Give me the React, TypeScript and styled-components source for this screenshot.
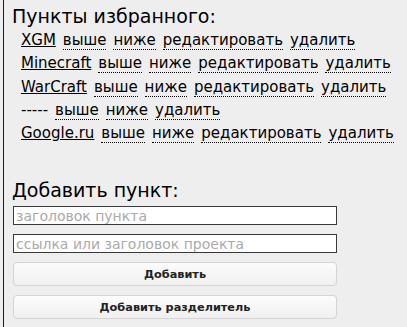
import React from "react";
import styled, { createGlobalStyle } from "styled-components";

const GlobalStyle = createGlobalStyle`
  html, body {
    margin: 0;
    padding: 0;
    background: #eeeeee;
  }
  body {
    padding-left: 3px;
    font-family: "DejaVu Sans", Verdana, sans-serif;
    color: #000;
  }
`;

type Item = { title: string; separator?: boolean };

const items: Item[] = [
  { title: "XGM" },
  { title: "Minecraft" },
  { title: "WarCraft" },
  { title: "-----", separator: true },
  { title: "Google.ru" },
];

const App: React.FC = () => {
  return (
    <>
      <GlobalStyle />
      <Panel>
        <Heading>Пункты избранного:</Heading>
        <List>
          {items.map((item) => (
            <Row key={item.title}>
              {item.separator ? (
                <Separator>{item.title}</Separator>
              ) : (
                <TitleLink href="#">{item.title}</TitleLink>
              )}
              <Action href="#">выше</Action>
              <Action href="#">ниже</Action>
              {!item.separator && <Action href="#">редактировать</Action>}
              <Action href="#">удалить</Action>
            </Row>
          ))}
        </List>
        <Heading>Добавить пункт:</Heading>
        <Form>
          <Field placeholder="заголовок пункта" />
          <Field placeholder="ссылка или заголовок проекта" />
          <Button type="button">Добавить</Button>
          <Button type="button">Добавить разделитель</Button>
        </Form>
      </Panel>
    </>
  );
};

export default App;

const Panel = styled.div`
  border-left: 1px solid #1a1a1a;
  padding: 4px 0 8px 8px;
  min-height: 315px;
`;

const Heading = styled.div`
  font-size: 19px;
  line-height: 24px;
`;

const List = styled.div`
  display: flex;
  flex-direction: column;
  padding: 1px 0 0 9px;
  margin-bottom: 33px;
`;

const Row = styled.div`
  display: flex;
  gap: 7px;
  font-size: 15px;
  line-height: 23.3px;
  white-space: nowrap;
`;

const TitleLink = styled.a`
  color: #000;
  text-decoration: underline;
`;

const Separator = styled.span``;

const Action = styled.a`
  color: #000;
  text-decoration: none;
  border-bottom: 1px dotted #000;
  line-height: 18px;
  align-self: center;
`;

const Form = styled.div`
  display: flex;
  flex-direction: column;
  gap: 9px;
  padding: 4px 70px 0 1px;
`;

const Field = styled.input`
  box-sizing: border-box;
  height: 19px;
  border: 1px solid #3a3a3a;
  background: #fff;
  padding: 0 2px;
  font-family: "DejaVu Sans", Verdana, sans-serif;
  font-size: 14px;
  &::placeholder {
    color: #aaaaaa;
  }
`;

const Button = styled.button`
  box-sizing: border-box;
  height: 24px;
  border: 1px solid #d4d4d4;
  border-radius: 4px;
  background: linear-gradient(#fcfcfc, #f0f0f0);
  font-family: "DejaVu Sans", Verdana, sans-serif;
  font-weight: bold;
  font-size: 11.3px;
  color: #222;
`;
